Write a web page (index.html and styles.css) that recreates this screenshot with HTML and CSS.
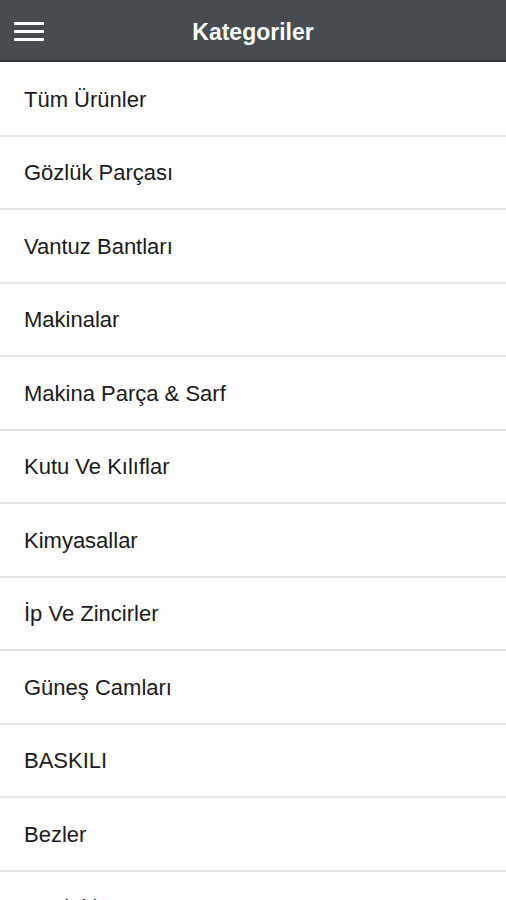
FILE: index.html
```html
<!DOCTYPE html>
<html lang="tr">
<head>
    <meta charset="UTF-8">
    <meta name="viewport" content="width=device-width, initial-scale=1.0">
    <title>Kategoriler</title>
    <link rel="stylesheet" href="styles.css">
</head>
<body>
    <header class="topbar">
        <button class="menu-btn" aria-label="Menü">
            <span></span><span></span><span></span>
        </button>
        <h1>Kategoriler</h1>
    </header>
    <ul class="category-list">
        <li>Tüm Ürünler</li>
        <li>Gözlük Parçası</li>
        <li>Vantuz Bantları</li>
        <li>Makinalar</li>
        <li>Makina Parça &amp; Sarf</li>
        <li>Kutu Ve Kılıflar</li>
        <li>Kimyasallar</li>
        <li>İp Ve Zincirler</li>
        <li>Güneş Camları</li>
        <li>BASKILI</li>
        <li>Bezler</li>
        <li>Gözlükler</li>
    </ul>
</body>
</html>
```

FILE: styles.css
```css
body {
    margin: 0;
    font-family: "Liberation Sans", Arial, sans-serif;
    background-color: #fff;
}

.topbar {
    height: 60px;
    background-color: #464c50;
    border-bottom: 2px solid #2f3438;
    display: flex;
    align-items: center;
    justify-content: center;
    position: relative;
}

.topbar h1 {
    margin: 0;
    color: #fff;
    font-size: 23px;
    font-weight: bold;
    padding-top: 4px;
}

.menu-btn {
    position: absolute;
    left: 14px;
    top: 22px;
    width: 30px;
    padding: 0;
    border: none;
    background: none;
    display: flex;
    flex-direction: column;
    gap: 5px;
}

.menu-btn span {
    display: block;
    height: 3px;
    background-color: #fff;
    border-radius: 1px;
}

.category-list {
    list-style: none;
    margin: 0;
    padding: 1px 0 0;
}

.category-list li {
    height: 71.5px;
    border-bottom: 2px solid #e6e6e6;
    display: flex;
    align-items: center;
    padding-left: 24px;
    padding-top: 2px;
    box-sizing: border-box;
    height: 73.5px;
    font-size: 22px;
    color: #1a1a1a;
}
```
